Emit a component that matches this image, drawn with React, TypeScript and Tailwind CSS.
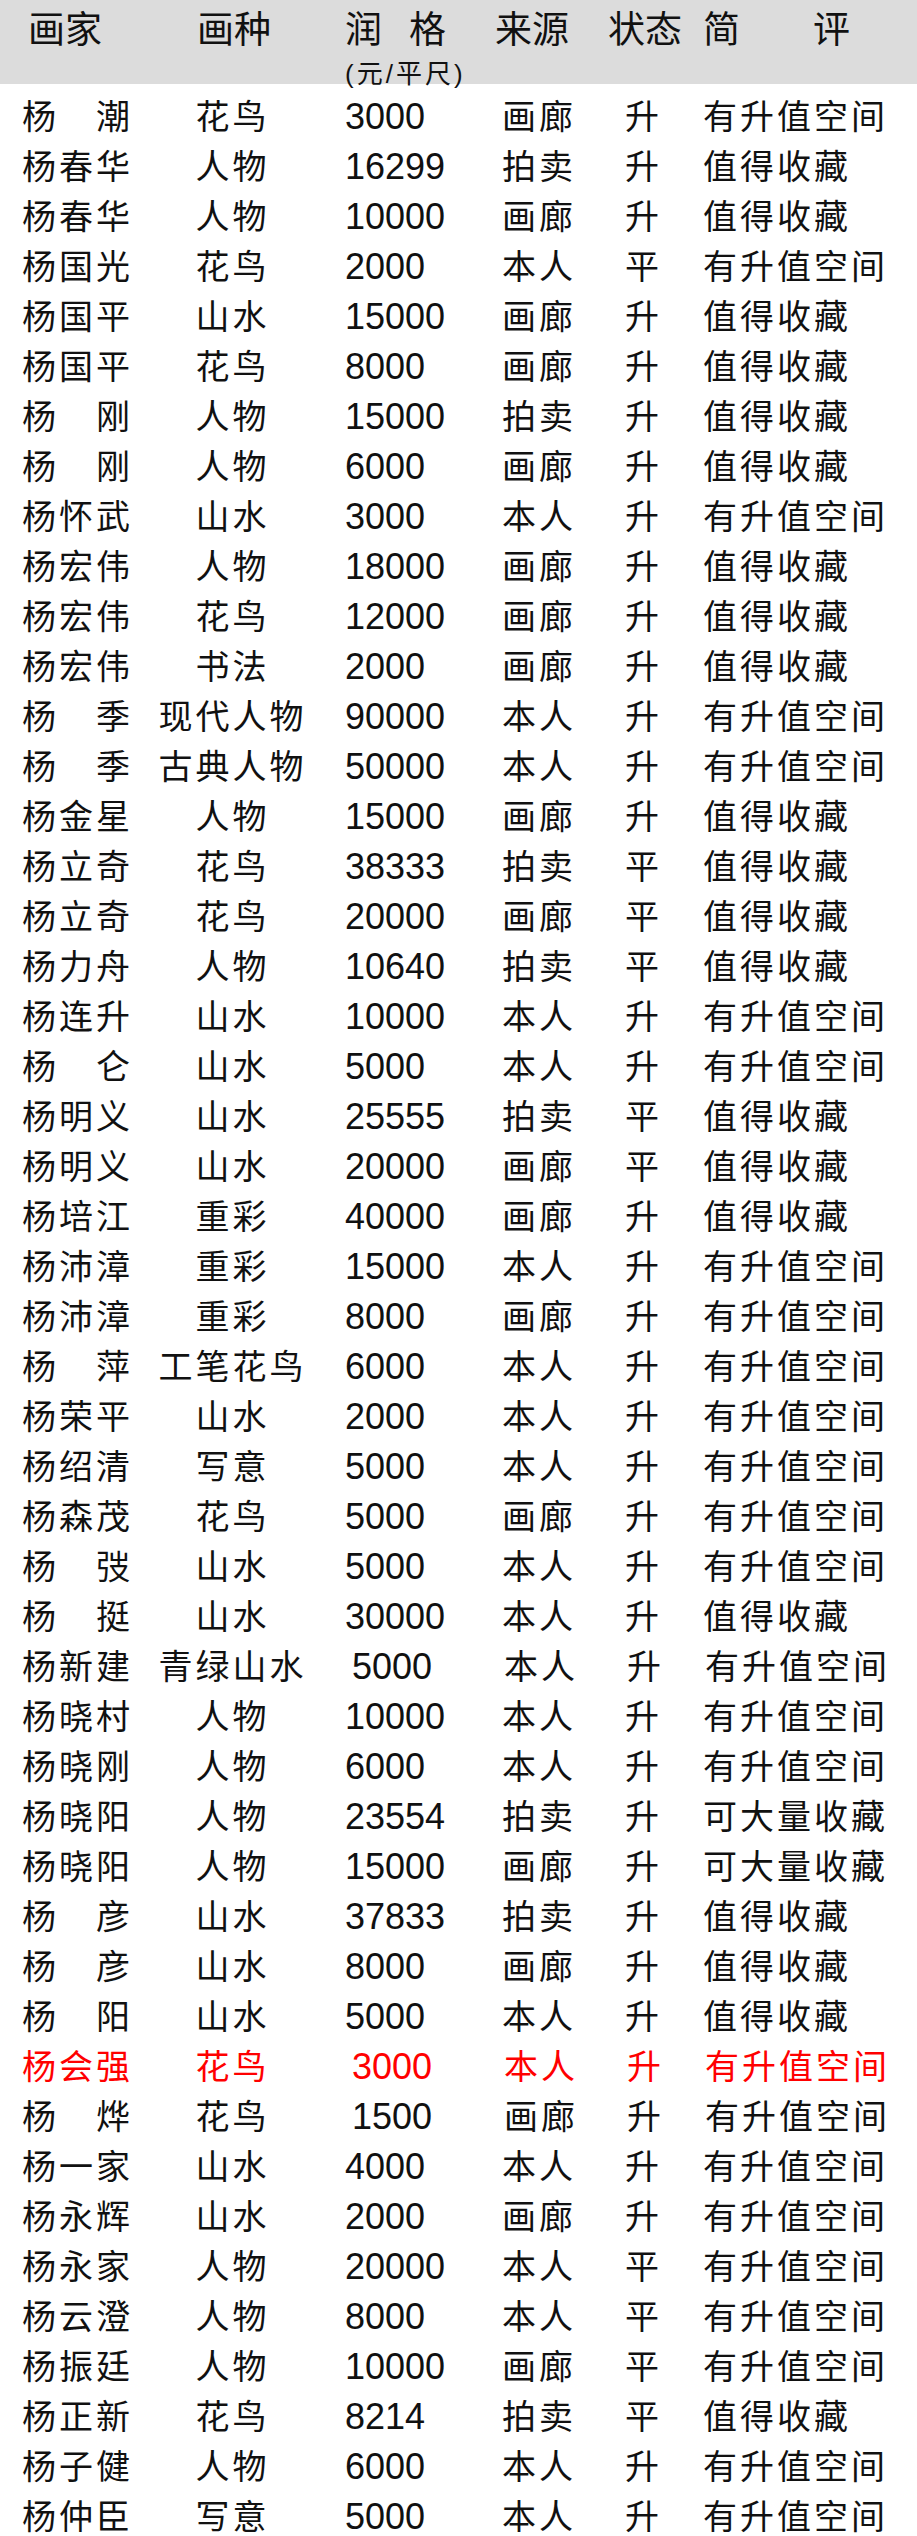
const rows: [string, string, string, string, string, string][] = [
  ["杨潮", "花鸟", "3000", "画廊", "升", "有升值空间"],
  ["杨春华", "人物", "16299", "拍卖", "升", "值得收藏"],
  ["杨春华", "人物", "10000", "画廊", "升", "值得收藏"],
  ["杨国光", "花鸟", "2000", "本人", "平", "有升值空间"],
  ["杨国平", "山水", "15000", "画廊", "升", "值得收藏"],
  ["杨国平", "花鸟", "8000", "画廊", "升", "值得收藏"],
  ["杨刚", "人物", "15000", "拍卖", "升", "值得收藏"],
  ["杨刚", "人物", "6000", "画廊", "升", "值得收藏"],
  ["杨怀武", "山水", "3000", "本人", "升", "有升值空间"],
  ["杨宏伟", "人物", "18000", "画廊", "升", "值得收藏"],
  ["杨宏伟", "花鸟", "12000", "画廊", "升", "值得收藏"],
  ["杨宏伟", "书法", "2000", "画廊", "升", "值得收藏"],
  ["杨季", "现代人物", "90000", "本人", "升", "有升值空间"],
  ["杨季", "古典人物", "50000", "本人", "升", "有升值空间"],
  ["杨金星", "人物", "15000", "画廊", "升", "值得收藏"],
  ["杨立奇", "花鸟", "38333", "拍卖", "平", "值得收藏"],
  ["杨立奇", "花鸟", "20000", "画廊", "平", "值得收藏"],
  ["杨力舟", "人物", "10640", "拍卖", "平", "值得收藏"],
  ["杨连升", "山水", "10000", "本人", "升", "有升值空间"],
  ["杨仑", "山水", "5000", "本人", "升", "有升值空间"],
  ["杨明义", "山水", "25555", "拍卖", "平", "值得收藏"],
  ["杨明义", "山水", "20000", "画廊", "平", "值得收藏"],
  ["杨培江", "重彩", "40000", "画廊", "升", "值得收藏"],
  ["杨沛漳", "重彩", "15000", "本人", "升", "有升值空间"],
  ["杨沛漳", "重彩", "8000", "画廊", "升", "有升值空间"],
  ["杨萍", "工笔花鸟", "6000", "本人", "升", "有升值空间"],
  ["杨荣平", "山水", "2000", "本人", "升", "有升值空间"],
  ["杨绍清", "写意", "5000", "本人", "升", "有升值空间"],
  ["杨森茂", "花鸟", "5000", "画廊", "升", "有升值空间"],
  ["杨弢", "山水", "5000", "本人", "升", "有升值空间"],
  ["杨挺", "山水", "30000", "本人", "升", "值得收藏"],
  ["杨新建", "青绿山水", "5000", "本人", "升", "有升值空间"],
  ["杨晓村", "人物", "10000", "本人", "升", "有升值空间"],
  ["杨晓刚", "人物", "6000", "本人", "升", "有升值空间"],
  ["杨晓阳", "人物", "23554", "拍卖", "升", "可大量收藏"],
  ["杨晓阳", "人物", "15000", "画廊", "升", "可大量收藏"],
  ["杨彦", "山水", "37833", "拍卖", "升", "值得收藏"],
  ["杨彦", "山水", "8000", "画廊", "升", "值得收藏"],
  ["杨阳", "山水", "5000", "本人", "升", "值得收藏"],
  ["杨会强", "花鸟", "3000", "本人", "升", "有升值空间"],
  ["杨烨", "花鸟", "1500", "画廊", "升", "有升值空间"],
  ["杨一家", "山水", "4000", "本人", "升", "有升值空间"],
  ["杨永辉", "山水", "2000", "画廊", "升", "有升值空间"],
  ["杨永家", "人物", "20000", "本人", "平", "有升值空间"],
  ["杨云澄", "人物", "8000", "本人", "平", "有升值空间"],
  ["杨振廷", "人物", "10000", "画廊", "平", "有升值空间"],
  ["杨正新", "花鸟", "8214", "拍卖", "平", "值得收藏"],
  ["杨子健", "人物", "6000", "本人", "升", "有升值空间"],
  ["杨仲臣", "写意", "5000", "本人", "升", "有升值空间"],
];

// a few prices sit a little to the right in the picture
const shifted = ["杨新建", "杨烨", "杨会强"];

const font = {
  fontFamily: '"Liberation Sans", "Noto Sans CJK SC", sans-serif',
};

const Row = ({ data }: { data: (typeof rows)[number] }) => {
  const [name, kind, price, source, state, note] = data;
  const red = name === "杨会强";
  return (
    <div
      className={`flex h-[50px] items-start leading-[50px] ${
        red ? "text-[#ff0000]" : "text-[#111]"
      }`}
    >
      <div className="ml-[22px] flex w-[108px] shrink-0 justify-between text-[34px]">
        {name.split("").map((c, i) => (
          <span key={i}>{c}</span>
        ))}
      </div>
      <div className="ml-[20px] w-[165px] shrink-0 text-center text-[34px] tracking-[3px]">
        {kind}
      </div>
      <div
        className={`w-[157px] shrink-0 text-[36px] ${
          shifted.includes(name) ? "ml-[37px]" : "ml-[30px]"
        }`}
      >
        {price}
      </div>
      <div
        className={`w-[123px] shrink-0 text-[34px] tracking-[3px] ${
          shifted.includes(name) ? "-ml-[5px]" : ""
        }`}
      >
        {source}
      </div>
      <div className="w-[78px] shrink-0 text-[34px]">{state}</div>
      <div className="flex-1 whitespace-nowrap text-[34px] tracking-[3px]">
        {note}
      </div>
    </div>
  );
};

export default function App() {
  return (
    <div className="w-[917px] bg-white" style={font}>
      <div className="flex h-[84px] bg-[#dcdcdc] pt-[12px] text-[37px] leading-[38px] text-[#111]">
        <div className="ml-[28px] w-[169px] shrink-0">画家</div>
        <div className="w-[148px] shrink-0">画种</div>
        <div className="w-[150px] shrink-0">
          <div className="flex">
            <span>润</span>
            <span className="ml-[27px]">格</span>
          </div>
          <div className="mt-[12px] whitespace-nowrap text-[26px] leading-[24px] tracking-[3px]">
            (元/平尺)
          </div>
        </div>
        <div className="w-[113px] shrink-0">来源</div>
        <div className="w-[95px] shrink-0">状态</div>
        <div className="flex">
          <span>简</span>
          <span className="ml-[73px]">评</span>
        </div>
      </div>
      <div className="pt-[8px]">
        {rows.map((r, i) => (
          <Row key={i} data={r} />
        ))}
      </div>
    </div>
  );
}
